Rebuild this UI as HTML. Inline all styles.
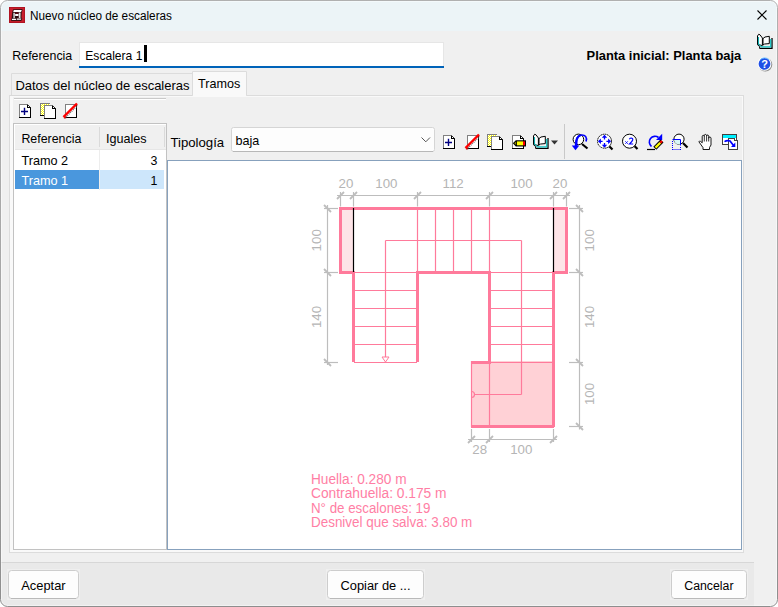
<!DOCTYPE html>
<html><head><meta charset="utf-8">
<style>
html,body{margin:0;padding:0;background:#fff;width:778px;height:607px;overflow:hidden;}
svg{display:block;}
text{font-family:"Liberation Sans",sans-serif;}
</style></head>
<body>
<svg width="778" height="607" viewBox="0 0 778 607">
<defs><pattern id="chk" patternUnits="userSpaceOnUse" width="2" height="2"><rect width="2" height="2" fill="#ffffff"/><rect width="1" height="1" fill="#ffff00"/><rect x="1" y="1" width="1" height="1" fill="#ffff00"/></pattern><clipPath id="wc"><rect x="0.5" y="0.5" width="777" height="606" rx="7" ry="7"/></clipPath></defs>
<rect x="0.5" y="0.5" width="777" height="606" rx="7" ry="7" fill="#f0f0f0"/>
<g clip-path="url(#wc)">
<rect x="0" y="0" width="778" height="31" fill="#ecf4f7" />
<rect x="0" y="562" width="754" height="1" fill="#d7d7d7" />
<rect x="0" y="563" width="754" height="44" fill="#e9e9e9" />
</g>
<linearGradient id="wb" gradientUnits="userSpaceOnUse" x1="0" y1="0" x2="0" y2="607"><stop offset="0" stop-color="#b0b0b0"/><stop offset="0.5" stop-color="#a6a6a6"/><stop offset="1" stop-color="#8e8e8e"/></linearGradient>
<rect x="1.5" y="1.5" width="775" height="604" rx="6" ry="6" fill="none" stroke="#ffffff" stroke-opacity="0.45"/>
<rect x="0.5" y="0.5" width="777" height="606" rx="7" ry="7" fill="none" stroke="url(#wb)"/>
<rect x="9" y="7" width="16" height="16" fill="#c81e2c"/>
<rect x="9.5" y="7.5" width="15" height="15" fill="none" stroke="#b01422"/>
<g stroke-linejoin="round"><path d="M13.2 9.8 L22.2 9.6 L21.3 12.6 L21 18 L21.8 18 L21.2 20.5 L11.4 20.6 L12 18.2 L12.6 12.6 Z" fill="#2a0a0c" stroke="#111" stroke-width="0.6"/><path d="M13.8 10.1 L21.8 10 L21 11.9 L13.2 12 Z" fill="#ffffff"/><path d="M13.3 12.8 L14.9 12.8 L14.8 18.2 L13.4 18.2 Z" fill="#d8d8d8"/><path d="M18.7 12.6 L20.6 12.6 L20.5 17.9 L18.8 17.9 Z" fill="#e4e4e4"/><path d="M15.2 14.1 L18.5 14.1 L18.4 16.1 L15.2 16.1 Z" fill="#ffffff"/><path d="M15.2 12.7 L18.5 12.7 L18.5 13.5 L15.2 13.5 Z" fill="#8a1018"/><path d="M12.1 18.7 L16.3 18.7 L15.9 20.1 L11.8 20.1 Z" fill="#ffffff"/><path d="M17 18.4 L21.3 18.4 L20.9 19.8 L16.7 19.8 Z" fill="#ffffff"/></g>
<text x="30" y="19.8" font-size="12.5" textLength="142" lengthAdjust="spacingAndGlyphs">Nuevo núcleo de escaleras</text>
<path d="M757.5 10.5 L766.5 19.5 M766.5 10.5 L757.5 19.5" stroke="#000" stroke-width="1.1" fill="none"/>
<text x="12.3" y="59.6" font-size="12.4" fill="#000" >Referencia</text>
<rect x="79" y="42" width="365" height="26" fill="#ffffff" />
<rect x="79.5" y="42.5" width="364" height="25" fill="none" stroke="#e6e6e6"/>
<rect x="79" y="66" width="365" height="2" fill="#0063b9" />
<text x="85.3" y="59.6" font-size="12.1" fill="#000" >Escalera 1</text>
<rect x="144" y="45" width="3" height="17" fill="#000" />
<text x="741.3" y="59.7" font-size="12.9" fill="#000" font-weight="bold" text-anchor="end" >Planta inicial: Planta baja</text>
<g transform="translate(755,32)" fill="none" stroke-linejoin="miter"><path d="M4.8 16.3 L17 16.3 L17 6" stroke="#000" stroke-width="1.3"/><path d="M6 14.8 L15.7 14.8 L15.7 7" stroke="#12c4c4" stroke-width="1.2"/><path d="M2.4 12.6 L4.6 14.6 L4.6 16.6" stroke="#000" stroke-width="1"/><path d="M2.5 4 L3.6 2.3 L5 2.8 L7.4 6 L7.4 13.6 L5 13 L2.5 12.6 Z" fill="#fff" stroke="#000" stroke-width="1"/><path d="M3.5 5 L3.5 12 L6.2 14.6" stroke="#12b0b0" stroke-width="1.1"/><path d="M8 6.6 L10 5 L14.3 4.3 L14.3 11.6 L9.6 12 L8 13 Z" fill="#fff" stroke="#000" stroke-width="1"/></g>
<circle cx="765.3" cy="64.6" r="7" fill="#3a3a3a" opacity="0.55"/>
<circle cx="764.5" cy="63.9" r="6.9" fill="#ffffff"/>
<circle cx="764.5" cy="63.9" r="5.9" fill="#1f4fe6"/>
<path d="M760 60 A5.9 5.9 0 0 1 769 60" fill="none" stroke="#5fb4ff" stroke-width="1"/>
<text x="764.6" y="68.4" font-size="11" fill="#fff" font-weight="bold" text-anchor="middle" >?</text>
<rect x="9.5" y="95.5" width="734" height="457" fill="#f9f9f9" stroke="#dcdcdc"/>
<rect x="13" y="97" width="729" height="453" fill="#f0f0f0" />
<path d="M11.5 95 L11.5 73.5 L192.5 73.5 L192.5 95" fill="#f0f0f0" stroke="#dcdcdc"/>
<rect x="10" y="95" width="183" height="1" fill="#d9d9d9" />
<text x="15.4" y="89.8" font-size="13.0" fill="#000" >Datos del núcleo de escaleras</text>
<path d="M192.5 95.5 L192.5 71.5 L246.5 71.5 L246.5 95.5" fill="#f9f9f9" stroke="#dcdcdc"/>
<rect x="193" y="95" width="53" height="2" fill="#f9f9f9" />
<text x="198" y="87.8" font-size="12.6" fill="#000" >Tramos</text>
<rect x="14" y="98" width="152" height="1" fill="#c9c9c9" />
<rect x="14" y="99" width="152" height="1" fill="#ffffff" />
<g shape-rendering="crispEdges"><path d="M19.5 117.5 L19.5 104.5 L27.5 104.5 L30.5 107.5 L30.5 117.5 Z" fill="#fff"/><path d="M19.5 117 L19.5 104.5 L27.5 104.5" fill="none" stroke="#808080"/><path d="M30.5 107 L30.5 117.5 L19 117.5" fill="none" stroke="#000"/><path d="M27.5 104.5 L30.5 107.5" fill="none" stroke="#303030" shape-rendering="auto"/><path d="M27.5 105 L27.5 107.5 L30 107.5" fill="none" stroke="#000"/></g>
<path d="M21 111.5 L28 111.5 M24.5 107.8 L24.5 115" stroke="#000080" stroke-width="1.4"/>
<g shape-rendering="crispEdges"><rect x="40" y="103" width="10" height="13" fill="url(#chk)"/><path d="M40.5 116 L40.5 103.5 L49.5 103.5" fill="none" stroke="#808080"/><path d="M40 115.5 L44 115.5" fill="none" stroke="#000"/><path d="M44.5 118.5 L44.5 105.5 L52.5 105.5 L55.5 108.5 L55.5 118.5 Z" fill="#fff"/><path d="M44.5 118 L44.5 105.5 L52.5 105.5" fill="none" stroke="#808080"/><path d="M55.5 108 L55.5 118.5 L44 118.5" fill="none" stroke="#000"/><path d="M52.5 105.5 L55.5 108.5" fill="none" stroke="#303030" shape-rendering="auto"/><path d="M52.5 106 L52.5 108.5 L55 108.5" fill="none" stroke="#000"/></g>
<g shape-rendering="crispEdges"><path d="M65.5 117.5 L65.5 104.5 L76.5 104.5 L76.5 104.5 L76.5 117.5 Z" fill="#fff"/><path d="M65.5 117 L65.5 104.5 L76.5 104.5" fill="none" stroke="#808080"/><path d="M76.5 104 L76.5 117.5 L65 117.5" fill="none" stroke="#000"/></g>
<path d="M64.5 118.5 L77.5 105.5" stroke="#707070" stroke-width="1.4" stroke-dasharray="1,1"/>
<path d="M63.5 117 L77 103.5" stroke="#ff0000" stroke-width="2.4"/>
<path d="M63.8 115.5 L63.8 118.2 L66.5 118.2 Z" fill="#ff0000"/>
<g shape-rendering="crispEdges">
<rect x="13" y="123" width="154" height="427" fill="#ffffff" />
<rect x="15" y="125" width="151" height="24" fill="#f0f0f0" />
<rect x="15" y="149" width="151" height="1" fill="#e6e6e6" />
<rect x="99" y="127" width="1" height="20" fill="#dadada" />
<rect x="164" y="127" width="1" height="20" fill="#dadada" />
<rect x="99" y="150" width="1" height="40" fill="#ededed" />
<rect x="15" y="170" width="84" height="19" fill="#4a97dd" />
<rect x="100" y="170" width="64" height="19" fill="#cde6fb" />
<rect x="13.5" y="123.5" width="153" height="426" fill="none" stroke="#c2c2c2"/>
</g>
<text x="21.4" y="142.5" font-size="12.4" fill="#000" >Referencia</text>
<text x="106" y="142.5" font-size="12.6" fill="#000" >Iguales</text>
<text x="21.4" y="164.8" font-size="12.7" fill="#000" >Tramo 2</text>
<text x="157.5" y="164.8" font-size="12.4" fill="#000" text-anchor="end" >3</text>
<text x="21.4" y="184.5" font-size="12.7" fill="#ffffff" >Tramo 1</text>
<text x="157.5" y="184.5" font-size="12.4" fill="#000" text-anchor="end" >1</text>
<text x="170.4" y="147" font-size="13.2" fill="#000" >Tipología</text>
<rect x="231.5" y="127.5" width="203" height="24" rx="2" fill="#fdfdfd" stroke="#d5d5d5"/>
<path d="M233 151.5 L433 151.5" stroke="#b8b8b8"/>
<text x="235.4" y="144.9" font-size="12.6" fill="#000" >baja</text>
<path d="M421.5 137.5 L425.8 141.8 L430 137.5" fill="none" stroke="#555" stroke-width="1"/>
<g shape-rendering="crispEdges"><path d="M443.5 148.5 L443.5 135.5 L451.5 135.5 L454.5 138.5 L454.5 148.5 Z" fill="#fff"/><path d="M443.5 148 L443.5 135.5 L451.5 135.5" fill="none" stroke="#808080"/><path d="M454.5 138 L454.5 148.5 L443 148.5" fill="none" stroke="#000"/><path d="M451.5 135.5 L454.5 138.5" fill="none" stroke="#303030" shape-rendering="auto"/><path d="M451.5 136 L451.5 138.5 L454 138.5" fill="none" stroke="#000"/></g>
<path d="M445 142.5 L452 142.5 M448.5 138.8 L448.5 146" stroke="#000080" stroke-width="1.4"/>
<g shape-rendering="crispEdges"><path d="M467.5 148.5 L467.5 135.5 L478.5 135.5 L478.5 135.5 L478.5 148.5 Z" fill="#fff"/><path d="M467.5 148 L467.5 135.5 L478.5 135.5" fill="none" stroke="#808080"/><path d="M478.5 135 L478.5 148.5 L467 148.5" fill="none" stroke="#000"/></g>
<path d="M466.5 149.5 L479.5 136.5" stroke="#707070" stroke-width="1.4" stroke-dasharray="1,1"/>
<path d="M465.5 148 L479 134.5" stroke="#ff0000" stroke-width="2.4"/>
<path d="M465.8 146.5 L465.8 149.2 L468.5 149.2 Z" fill="#ff0000"/>
<g shape-rendering="crispEdges"><rect x="487" y="134" width="10" height="13" fill="url(#chk)"/><path d="M487.5 147 L487.5 134.5 L496.5 134.5" fill="none" stroke="#808080"/><path d="M487 146.5 L491 146.5" fill="none" stroke="#000"/><path d="M491.5 149.5 L491.5 136.5 L499.5 136.5 L502.5 139.5 L502.5 149.5 Z" fill="#fff"/><path d="M491.5 149 L491.5 136.5 L499.5 136.5" fill="none" stroke="#808080"/><path d="M502.5 139 L502.5 149.5 L491 149.5" fill="none" stroke="#000"/><path d="M499.5 136.5 L502.5 139.5" fill="none" stroke="#303030" shape-rendering="auto"/><path d="M499.5 137 L499.5 139.5 L502 139.5" fill="none" stroke="#000"/></g>
<g shape-rendering="crispEdges"><path d="M512.5 148.5 L512.5 135.5 L520.5 135.5 L523.5 138.5 L523.5 148.5 Z" fill="#fff"/><path d="M512.5 148 L512.5 135.5 L520.5 135.5" fill="none" stroke="#808080"/><path d="M523.5 138 L523.5 148.5 L512 148.5" fill="none" stroke="#000"/><path d="M520.5 135.5 L523.5 138.5" fill="none" stroke="#303030" shape-rendering="auto"/><path d="M520.5 136 L520.5 138.5 L523 138.5" fill="none" stroke="#000"/></g>
<path d="M515.8 140.3 L526 140.3 L526 146.4 L515.8 146.4 L512.8 143.35 Z" fill="#000"/>
<rect x="517" y="141.4" width="6.2" height="3.9" fill="#ffff00"/>
<rect x="523" y="141.4" width="2" height="3.9" fill="#ff0000"/>
<path d="M516.2 141.6 L514.2 143.35 L516.2 145.1 Z" fill="#909000"/>
<g transform="translate(531,132)" fill="none" stroke-linejoin="miter"><path d="M4.8 16.3 L17 16.3 L17 6" stroke="#000" stroke-width="1.3"/><path d="M6 14.8 L15.7 14.8 L15.7 7" stroke="#12c4c4" stroke-width="1.2"/><path d="M2.4 12.6 L4.6 14.6 L4.6 16.6" stroke="#000" stroke-width="1"/><path d="M2.5 4 L3.6 2.3 L5 2.8 L7.4 6 L7.4 13.6 L5 13 L2.5 12.6 Z" fill="#fff" stroke="#000" stroke-width="1"/><path d="M3.5 5 L3.5 12 L6.2 14.6" stroke="#12b0b0" stroke-width="1.1"/><path d="M8 6.6 L10 5 L14.3 4.3 L14.3 11.6 L9.6 12 L8 13 Z" fill="#fff" stroke="#000" stroke-width="1"/></g>
<path d="M551 140.5 L558 140.5 L554.5 144.5 Z" fill="#333"/>
<rect x="564" y="124" width="1" height="35" fill="#c9c9c9" />
<path d="M582 144 L587.5 148.5" stroke="#000" stroke-width="2.2"/>
<circle cx="578.4" cy="139.4" r="5.3" fill="#fff" stroke="#000" stroke-width="1"/>
<path d="M586 141.5 C587.5 137 585 134.8 581.5 135 C577.5 135.3 575.5 140 575.5 146.5" fill="none" stroke="#0000ff" stroke-width="1.6"/>
<path d="M580.5 135.3 C577 136.5 576 141 576.5 146" fill="none" stroke="#0000ff" stroke-width="2.2"/>
<path d="M571.8 145.5 L579.3 145.5 L575.5 150.3 Z" fill="#0000ff"/>
<path d="M609 146 L612.5 149.5" stroke="#000" stroke-width="2.2"/>
<circle cx="604.5" cy="141.2" r="7" fill="#fff" stroke="#000" stroke-width="1" stroke-dasharray="1.6,0.6"/>
<g fill="#0000ff"><path d="M604.5 134.8 L601.8 137.8 L607.2 137.8Z M604.5 147.8 L601.8 144.8 L607.2 144.8Z M597.9 141.3 L600.9 138.6 L600.9 144Z M611.1 141.3 L608.1 138.6 L608.1 144Z"/></g>
<path d="M604.5 137 L604.5 139.5 M604.5 143 L604.5 145.5 M600 141.3 L602.6 141.3 M606.4 141.3 L609 141.3" stroke="#0000ff" stroke-width="1.3"/>
<path d="M634 145.5 L637.5 149" stroke="#000" stroke-width="2.2"/>
<circle cx="629.5" cy="141.2" r="7" fill="#fff" stroke="#000" stroke-width="1"/>
<path d="M625.3 141.3 L627.8 143.8 M627.8 141.3 L625.3 143.8" stroke="#0000ff" stroke-width="0.9"/>
<path d="M629.3 139.2 Q630 138 631.5 138 Q633 138.3 632.8 139.8 Q632.3 141.3 629.5 144 L633.2 144" fill="none" stroke="#0000ff" stroke-width="1.2"/>
<path d="M651.5 146.5 A5.6 5.6 0 1 1 658.5 137.5" fill="none" stroke="#0000ff" stroke-width="1.6"/>
<path d="M656 140 L662.2 140 L662.2 133.8 Z" fill="#0000ff"/>
<path d="M654.8 148.3 L662 141" stroke="#000" stroke-width="4.2"/>
<path d="M655.5 147.6 L660.3 142.8" stroke="#ffff00" stroke-width="2.2"/>
<path d="M660.3 142.8 L662 141" stroke="#ff0000" stroke-width="2.4"/>
<path d="M647 149.5 L655 149.5" stroke="#000" stroke-width="1.2"/>
<path d="M683 143 L687.5 147.5" stroke="#000" stroke-width="2.2"/>
<circle cx="679" cy="139.2" r="5.1" fill="#fff" stroke="#000" stroke-width="1"/>
<path d="M674 139.8 L680 139.8 L680 144.5 A5 5 0 0 1 674 139.8 Z" fill="#d8f8f8"/>
<path d="M672.5 139.5 L680.5 139.5 L680.5 145.5" fill="none" stroke="#0000ff" stroke-width="1"/>
<path d="M672.5 141 L672.5 150 M672.5 149.5 L681 149.5 M680.5 147 L680.5 150" fill="none" stroke="#0000ff" stroke-width="1" stroke-dasharray="1,1"/>
<path d="M703 149.5 L709.5 149.5 L709.5 147.5 L711 145 L711 138.2 Q710.8 137 709.8 137 Q708.8 137 708.7 138.2 L708.7 136.2 Q708.5 135 707.6 135 Q706.7 135 706.6 136.2 L706.6 135.6 Q706.3 134.4 705.4 134.4 Q704.4 134.4 704.3 135.6 L704.3 136.3 Q704 135.2 703.2 135.3 Q702.2 135.5 702.2 136.6 L702.2 142.8 L700.6 141.4 Q699.2 140.6 698.9 141.8 L703 147.6 Z" fill="#fff" stroke="#000" stroke-width="0.9"/>
<path d="M704.3 136.2 L704.3 141.5 M706.6 136.2 L706.6 141.5 M708.7 138 L708.7 141.5" stroke="#000" stroke-width="0.8"/>
<g shape-rendering="crispEdges"><rect x="722.5" y="134.5" width="14" height="10" fill="#fff" stroke="#404040"/><rect x="723" y="135" width="13" height="2.6" fill="#00f0ff"/><path d="M728.5 138.5 L734 138.5 L734 140.5 L737.5 140.5 L737.5 149.5 L728.5 149.5 Z" fill="#fff" stroke="#404040"/></g>
<path d="M724.5 141.6 Q727 140 730 141 L733.5 145.5" fill="none" stroke="#0000ff" stroke-width="1.7"/>
<path d="M731 147 L735.3 147 L735.3 142.6 Z" fill="#0000ff"/>
<rect x="167.5" y="160.5" width="574" height="389" fill="#ffffff" stroke="#87a1bd"/>
<g fill="none">
<rect x="342" y="210" width="11" height="61" fill="#fde4e7" />
<rect x="554" y="210" width="11" height="61" fill="#fde4e7" />
<rect x="471" y="361" width="82" height="66" fill="#ffd1d6" />
<line x1="417.5" y1="210" x2="417.5" y2="271" stroke="#ff7a9b" stroke-width="1.2" />
<line x1="435.5" y1="208" x2="435.5" y2="271" stroke="#ff7a9b" stroke-width="1.2" />
<line x1="453.5" y1="208" x2="453.5" y2="271" stroke="#ff7a9b" stroke-width="1.2" />
<line x1="471.5" y1="208" x2="471.5" y2="271" stroke="#ff7a9b" stroke-width="1.2" />
<line x1="489.5" y1="208" x2="489.5" y2="271" stroke="#ff7a9b" stroke-width="1.2" />
<line x1="385.5" y1="240.5" x2="521.5" y2="240.5" stroke="#ff7a9b" stroke-width="1.2" />
<line x1="385.5" y1="240.5" x2="385.5" y2="357" stroke="#ff7a9b" stroke-width="1.2" />
<line x1="521.5" y1="240.5" x2="521.5" y2="394.5" stroke="#ff7a9b" stroke-width="1.2" />
<line x1="474" y1="394.5" x2="521.5" y2="394.5" stroke="#ff7a9b" stroke-width="1.2" />
<line x1="353" y1="272.5" x2="417" y2="272.5" stroke="#ff7a9b" stroke-width="1.2" />
<line x1="490" y1="272.5" x2="553" y2="272.5" stroke="#ff7a9b" stroke-width="1.2" />
<line x1="354" y1="290.5" x2="417" y2="290.5" stroke="#ff7a9b" stroke-width="1.2" />
<line x1="354" y1="308.5" x2="417" y2="308.5" stroke="#ff7a9b" stroke-width="1.2" />
<line x1="354" y1="326.5" x2="417" y2="326.5" stroke="#ff7a9b" stroke-width="1.2" />
<line x1="354" y1="344.5" x2="417" y2="344.5" stroke="#ff7a9b" stroke-width="1.2" />
<line x1="354" y1="362.5" x2="417" y2="362.5" stroke="#ff7a9b" stroke-width="1.2" />
<line x1="490" y1="290.5" x2="553" y2="290.5" stroke="#ff7a9b" stroke-width="1.2" />
<line x1="490" y1="308.5" x2="553" y2="308.5" stroke="#ff7a9b" stroke-width="1.2" />
<line x1="490" y1="326.5" x2="553" y2="326.5" stroke="#ff7a9b" stroke-width="1.2" />
<line x1="490" y1="344.5" x2="553" y2="344.5" stroke="#ff7a9b" stroke-width="1.2" />
<line x1="490" y1="362.5" x2="553" y2="362.5" stroke="#ff7a9b" stroke-width="1.2" />
<line x1="489.5" y1="362" x2="489.5" y2="426" stroke="#ff7a9b" stroke-width="1.2" />
<line x1="471.5" y1="361" x2="471.5" y2="427" stroke="#ff7a9b" stroke-width="1.2" />
<path d="M340.5 271.5 L340.5 208.5 L566.5 208.5 L566.5 271.5" stroke="#ff7a9b" stroke-width="3"/>
<path d="M339 272.5 L354 272.5" stroke="#ff7a9b" stroke-width="3"/>
<path d="M553 272.5 L568 272.5" stroke="#ff7a9b" stroke-width="3"/>
<path d="M353.5 271 L353.5 362" stroke="#ff7a9b" stroke-width="3"/>
<path d="M417.5 271 L417.5 362" stroke="#ff7a9b" stroke-width="3"/>
<path d="M416 272.5 L491 272.5" stroke="#ff7a9b" stroke-width="3"/>
<path d="M489.5 271 L489.5 362" stroke="#ff7a9b" stroke-width="3"/>
<path d="M471 362.5 L491 362.5" stroke="#ff7a9b" stroke-width="3"/>
<path d="M553.5 271 L553.5 427" stroke="#ff7a9b" stroke-width="3"/>
<path d="M471 426.5 L554 426.5" stroke="#ff7a9b" stroke-width="3"/>
<line x1="353.5" y1="208" x2="353.5" y2="272" stroke="#000" stroke-width="1.2" />
<line x1="553.5" y1="208" x2="553.5" y2="272" stroke="#000" stroke-width="1.2" />
<path d="M382 357 L389 357 L385.5 362 Z" fill="#fff" stroke="#ff7a9b" stroke-width="1"/>
<path d="M471.5 391.5 A3 3 0 0 1 471.5 397.5" stroke="#ff7a9b" stroke-width="1.2"/>
</g>
<g>
<line x1="337" y1="195.5" x2="570" y2="195.5" stroke="#bdbdbd" stroke-width="1.2" />
<line x1="340.5" y1="192" x2="340.5" y2="206.5" stroke="#bdbdbd" stroke-width="1.2" />
<line x1="337.0" y1="199.0" x2="344.0" y2="192.0" stroke="#bdbdbd" stroke-width="1.8" />
<line x1="353.5" y1="192" x2="353.5" y2="206.5" stroke="#bdbdbd" stroke-width="1.2" />
<line x1="350.0" y1="199.0" x2="357.0" y2="192.0" stroke="#bdbdbd" stroke-width="1.8" />
<line x1="417.5" y1="192" x2="417.5" y2="206.5" stroke="#bdbdbd" stroke-width="1.2" />
<line x1="414.0" y1="199.0" x2="421.0" y2="192.0" stroke="#bdbdbd" stroke-width="1.8" />
<line x1="489.5" y1="192" x2="489.5" y2="206.5" stroke="#bdbdbd" stroke-width="1.2" />
<line x1="486.0" y1="199.0" x2="493.0" y2="192.0" stroke="#bdbdbd" stroke-width="1.8" />
<line x1="553.5" y1="192" x2="553.5" y2="206.5" stroke="#bdbdbd" stroke-width="1.2" />
<line x1="550.0" y1="199.0" x2="557.0" y2="192.0" stroke="#bdbdbd" stroke-width="1.8" />
<line x1="566.5" y1="192" x2="566.5" y2="206.5" stroke="#bdbdbd" stroke-width="1.2" />
<line x1="563.0" y1="199.0" x2="570.0" y2="192.0" stroke="#bdbdbd" stroke-width="1.8" />
<line x1="327.5" y1="205" x2="327.5" y2="365" stroke="#bdbdbd" stroke-width="1.2" />
<line x1="324" y1="208.5" x2="338" y2="208.5" stroke="#bdbdbd" stroke-width="1.2" />
<line x1="324.0" y1="205.0" x2="331.0" y2="212.0" stroke="#bdbdbd" stroke-width="1.8" />
<line x1="324" y1="272.5" x2="338" y2="272.5" stroke="#bdbdbd" stroke-width="1.2" />
<line x1="324.0" y1="269.0" x2="331.0" y2="276.0" stroke="#bdbdbd" stroke-width="1.8" />
<line x1="324" y1="362.5" x2="338" y2="362.5" stroke="#bdbdbd" stroke-width="1.2" />
<line x1="324.0" y1="359.0" x2="331.0" y2="366.0" stroke="#bdbdbd" stroke-width="1.8" />
<line x1="579.5" y1="205" x2="579.5" y2="429.5" stroke="#bdbdbd" stroke-width="1.2" />
<line x1="569" y1="208.5" x2="583" y2="208.5" stroke="#bdbdbd" stroke-width="1.2" />
<line x1="576.0" y1="205.0" x2="583.0" y2="212.0" stroke="#bdbdbd" stroke-width="1.8" />
<line x1="569" y1="272.5" x2="583" y2="272.5" stroke="#bdbdbd" stroke-width="1.2" />
<line x1="576.0" y1="269.0" x2="583.0" y2="276.0" stroke="#bdbdbd" stroke-width="1.8" />
<line x1="569" y1="362.5" x2="583" y2="362.5" stroke="#bdbdbd" stroke-width="1.2" />
<line x1="576.0" y1="359.0" x2="583.0" y2="366.0" stroke="#bdbdbd" stroke-width="1.8" />
<line x1="569" y1="426.5" x2="583" y2="426.5" stroke="#bdbdbd" stroke-width="1.2" />
<line x1="576.0" y1="423.0" x2="583.0" y2="430.0" stroke="#bdbdbd" stroke-width="1.8" />
<line x1="468" y1="439.5" x2="557" y2="439.5" stroke="#bdbdbd" stroke-width="1.2" />
<line x1="471.5" y1="429" x2="471.5" y2="442" stroke="#bdbdbd" stroke-width="1.2" />
<line x1="468.0" y1="443.0" x2="475.0" y2="436.0" stroke="#bdbdbd" stroke-width="1.8" />
<line x1="489.5" y1="429" x2="489.5" y2="442" stroke="#bdbdbd" stroke-width="1.2" />
<line x1="486.0" y1="443.0" x2="493.0" y2="436.0" stroke="#bdbdbd" stroke-width="1.8" />
<line x1="553.5" y1="429" x2="553.5" y2="442" stroke="#bdbdbd" stroke-width="1.2" />
<line x1="550.0" y1="443.0" x2="557.0" y2="436.0" stroke="#bdbdbd" stroke-width="1.8" />
</g>
<text x="346" y="188.2" font-size="13.3" fill="#b5b5b5" text-anchor="middle" >20</text>
<text x="386.4" y="188.2" font-size="13.3" fill="#b5b5b5" text-anchor="middle" >100</text>
<text x="453.1" y="188.2" font-size="13.3" fill="#b5b5b5" text-anchor="middle" >112</text>
<text x="521.5" y="188.2" font-size="13.3" fill="#b5b5b5" text-anchor="middle" >100</text>
<text x="560" y="188.2" font-size="13.3" fill="#b5b5b5" text-anchor="middle" >20</text>
<text x="479.7" y="453.9" font-size="13.3" fill="#b5b5b5" text-anchor="middle" >28</text>
<text x="521.3" y="453.9" font-size="13.3" fill="#b5b5b5" text-anchor="middle" >100</text>
<text x="0" y="0" font-size="13.3" fill="#b5b5b5" text-anchor="middle" transform="translate(321.3,240.3) rotate(-90)">100</text>
<text x="0" y="0" font-size="13.3" fill="#b5b5b5" text-anchor="middle" transform="translate(321.3,317) rotate(-90)">140</text>
<text x="0" y="0" font-size="13.3" fill="#b5b5b5" text-anchor="middle" transform="translate(594.4,240.3) rotate(-90)">100</text>
<text x="0" y="0" font-size="13.3" fill="#b5b5b5" text-anchor="middle" transform="translate(594.4,317) rotate(-90)">140</text>
<text x="0" y="0" font-size="13.3" fill="#b5b5b5" text-anchor="middle" transform="translate(594.4,394) rotate(-90)">100</text>
<text x="311" y="483.9" font-size="13.8" fill="#ff7ea4" textLength="95.5" lengthAdjust="spacingAndGlyphs">Huella: 0.280 m</text>
<text x="311" y="498.0" font-size="13.8" fill="#ff7ea4" textLength="135.6" lengthAdjust="spacingAndGlyphs">Contrahuella: 0.175 m</text>
<text x="311" y="512.6" font-size="13.8" fill="#ff7ea4" textLength="119.4" lengthAdjust="spacingAndGlyphs">N° de escalones: 19</text>
<text x="311" y="526.7" font-size="13.8" fill="#ff7ea4" textLength="161.3" lengthAdjust="spacingAndGlyphs">Desnivel que salva: 3.80 m</text>
<rect x="7" y="569" width="73" height="31" fill="#efefef"/>
<rect x="8.5" y="570.5" width="70" height="28" rx="3" fill="#fdfdfd" stroke="#cdcdcd"/>
<rect x="11" y="598" width="65" height="1" fill="#b9b9b9"/>
<text x="21.2" y="590" font-size="12.9" fill="#000" >Aceptar</text>
<rect x="326" y="569" width="99" height="31" fill="#efefef"/>
<rect x="327.5" y="570.5" width="96" height="28" rx="3" fill="#fdfdfd" stroke="#cdcdcd"/>
<rect x="330" y="598" width="91" height="1" fill="#b9b9b9"/>
<text x="340.5" y="590" font-size="12.85" fill="#000" >Copiar de ...</text>
<rect x="670" y="569" width="78" height="31" fill="#efefef"/>
<rect x="671.5" y="570.5" width="75" height="28" rx="3" fill="#fdfdfd" stroke="#cdcdcd"/>
<rect x="674" y="598" width="70" height="1" fill="#b9b9b9"/>
<text x="684.3" y="590" font-size="12.3" fill="#000" >Cancelar</text>
</svg>
</body></html>
